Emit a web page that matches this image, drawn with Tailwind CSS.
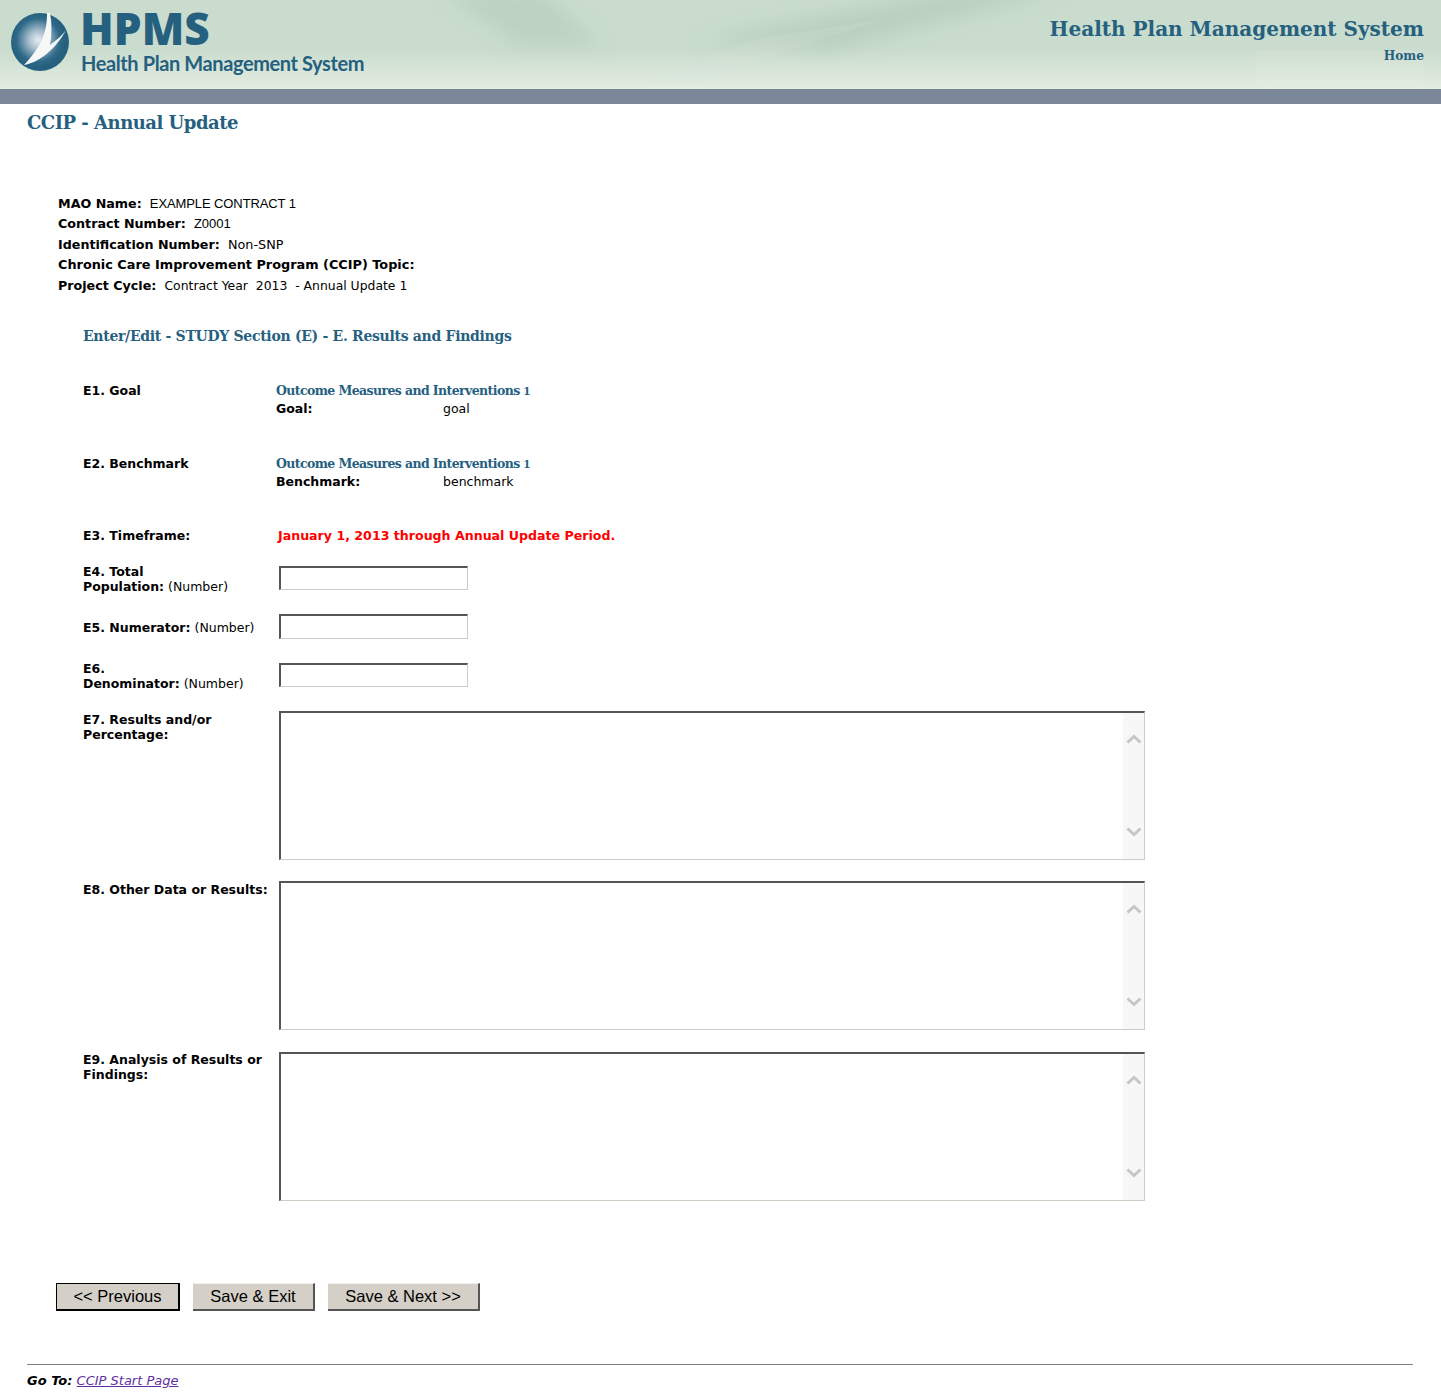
<!DOCTYPE html>
<html lang="en">
<head>
  <meta charset="UTF-8" />
  <title>CCIP - Annual Update</title>
  <script src="https://cdn.jsdelivr.net/npm/@tailwindcss/browser@4"></script>
</head>
<body class="bg-white font-['DejaVu_Sans',sans-serif] text-[12.5px] text-black">

  <!-- Header -->
  <header class="relative h-[89px] bg-linear-to-b from-[#c9dccd] from-55% to-[#e4ede2] overflow-hidden">
    <svg class="absolute left-0 top-0" width="1441" height="89" viewBox="0 0 1441 89">
      <defs>
        <filter id="soft" x="-20%" y="-50%" width="140%" height="200%"><feGaussianBlur stdDeviation="9"/></filter>
      </defs>
      <g filter="url(#soft)">
        <polygon points="440,-10 540,-10 600,45 520,45" fill="#b8cfbc" opacity="0.75"/>
        <polygon points="700,40 960,-10 1060,-10 830,50" fill="#b5ccb9" opacity="0.8"/>
      </g>
      <polygon points="640,85 760,38 880,20 690,85" fill="#d8e5da" opacity="0.22"/>
      <rect x="1256" y="50" width="167" height="39" fill="#e4ede2" opacity="0.2"/>
    </svg>
    <div class="relative flex justify-between h-full">
      <div class="flex pl-[11px] pt-[13px]">
        <svg class="shrink-0" width="58" height="58" viewBox="0 0 58 58">
          <defs>
            <radialGradient id="globe" gradientUnits="userSpaceOnUse" cx="27" cy="27" r="27">
              <stop offset="0" stop-color="#e8edf0"/>
              <stop offset="0.35" stop-color="#a5bccb"/>
              <stop offset="0.8" stop-color="#2f6a89"/>
              <stop offset="1" stop-color="#26607f"/>
            </radialGradient>
          </defs>
          <circle cx="29" cy="29" r="29" fill="url(#globe)"/>
          <path d="M36 0 C36 14 34 30 13 52 C26 50 44 38 55 17 C50 24 44 28 39 32 C41 22 41 10 39 0 Z" fill="#f5f8f6"/>
        </svg>
        <div class="ml-[11px]">
          <div class="font-['Open_Sans',sans-serif] font-extrabold text-[44px] leading-[36px] mt-[-3px] tracking-[0.1px] text-[#26607f]">HPMS</div>
          <div class="font-['Lato',sans-serif] font-bold text-[20px] leading-[28px] mt-[3px] ml-[1px] tracking-[-0.4px] text-[#26607f]">Health Plan Management System</div>
        </div>
      </div>
      <div class="text-right pr-[17px] pt-[15px] font-['DejaVu_Serif',serif] font-bold text-[#26607f]">
        <div class="text-[20px] leading-[28px]">Health Plan Management System</div>
        <div class="text-[12.2px] leading-[18px] mt-[4px]">Home</div>
      </div>
    </div>
  </header>
  <div class="h-[15px] bg-[#798799]"></div>

  <main class="pl-[27px] pr-[28px]">
    <h1 class="font-['DejaVu_Serif',serif] font-bold text-[18px] leading-[26px] mt-[6px] tracking-[-0.5px] text-[#26607f]">CCIP - Annual Update</h1>

    <!-- Contract info -->
    <div class="ml-[31px] mt-[58px] leading-[20.4px] text-[12.7px]">
      <div class="h-[20.4px]"><b>MAO Name:</b>&nbsp; <span class="font-['Liberation_Sans',sans-serif] text-[13px] tracking-[-0.1px]">EXAMPLE CONTRACT 1</span></div>
      <div class="h-[20.4px]"><b>Contract Number:</b>&nbsp; <span class="font-['Liberation_Sans',sans-serif] text-[13px]">Z0001</span></div>
      <div class="h-[20.4px]"><b>Identification Number:</b>&nbsp; <span class="text-[12.8px]">Non-SNP</span></div>
      <div class="h-[20.4px] text-[12.85px]"><b>Chronic Care Improvement Program (CCIP) Topic:</b></div>
      <div class="h-[20.4px]"><b>Project Cycle:</b>&nbsp; <span class="text-[12.4px]">Contract Year&nbsp; 2013&nbsp; - Annual Update 1</span></div>
    </div>

    <div class="ml-[56px]">
      <h2 class="font-['DejaVu_Serif',serif] font-bold text-[14px] leading-[20px] mt-[30px] tracking-[-0.3px] text-[#26607f]">Enter/Edit - STUDY Section (E) - E. Results and Findings</h2>

      <div class="flex mt-[36px]">
        <div class="w-[193px] font-bold leading-[18px]">E1. Goal</div>
        <div>
          <div class="font-['DejaVu_Serif',serif] font-bold text-[12.5px] leading-[18px] tracking-[-0.6px] text-[#26607f]">Outcome Measures and Interventions <span class="text-[10.5px]">1</span></div>
          <div class="flex leading-[18px]"><b class="w-[167px]">Goal:</b><span>goal</span></div>
        </div>
      </div>

      <div class="flex mt-[37px]">
        <div class="w-[193px] font-bold leading-[18px]">E2. Benchmark</div>
        <div>
          <div class="font-['DejaVu_Serif',serif] font-bold text-[12.5px] leading-[18px] tracking-[-0.6px] text-[#26607f]">Outcome Measures and Interventions <span class="text-[10.5px]">1</span></div>
          <div class="flex leading-[18px]"><b class="w-[167px]">Benchmark:</b><span>benchmark</span></div>
        </div>
      </div>

      <div class="flex mt-[36px]">
        <div class="w-[195px] font-bold leading-[18px]">E3. Timeframe:</div>
        <div class="font-bold text-[12.6px] leading-[18px] text-[#f00]">January 1, 2013 through Annual Update Period.</div>
      </div>

      <div class="flex h-[24px] mt-[21px]">
        <div class="w-[196px] leading-[15px] -mt-[2px] shrink-0"><b>E4. Total<br>Population:</b> (Number)</div>
        <input type="text" class="w-[189px] h-[24px] bg-white border border-[#d0ccc4] border-t-2 border-l-2 border-t-[#555] border-l-[#555]">
      </div>

      <div class="flex h-[25px] mt-[24px]">
        <div class="w-[196px] leading-[15px] pt-[6px] shrink-0"><b>E5. Numerator:</b> (Number)</div>
        <input type="text" class="w-[189px] h-[25px] bg-white border border-[#d0ccc4] border-t-2 border-l-2 border-t-[#555] border-l-[#555]">
      </div>

      <div class="flex h-[24px] mt-[24px]">
        <div class="w-[196px] leading-[15px] -mt-[2px] shrink-0"><b>E6.<br>Denominator:</b> (Number)</div>
        <input type="text" class="w-[189px] h-[24px] bg-white border border-[#d0ccc4] border-t-2 border-l-2 border-t-[#555] border-l-[#555]">
      </div>

      <div class="flex mt-[24px]">
        <div class="w-[196px] leading-[15px] pt-[1px] font-bold shrink-0">E7. Results and/or<br>Percentage:</div>
        <div class="relative w-[866px] h-[149px] bg-white border border-[#d0ccc4] border-t-2 border-l-2 border-t-[#555] border-l-[#555]">
          <div class="absolute right-0 top-0 bottom-0 w-[21px] bg-[#f7f7f7] flex flex-col justify-between items-center pt-[21px] pb-[22px]">
            <svg width="16" height="10" viewBox="0 0 16 10"><path d="M1.5 8.5 L8 2.5 L14.5 8.5" fill="none" stroke="#c6c6c6" stroke-width="3"/></svg>
            <svg width="16" height="10" viewBox="0 0 16 10"><path d="M1.5 1.5 L8 7.5 L14.5 1.5" fill="none" stroke="#c6c6c6" stroke-width="3"/></svg>
          </div>
        </div>
      </div>

      <div class="flex mt-[21px]">
        <div class="w-[196px] leading-[15px] pt-[1px] font-bold shrink-0">E8. Other Data or Results:</div>
        <div class="relative w-[866px] h-[149px] bg-white border border-[#d0ccc4] border-t-2 border-l-2 border-t-[#555] border-l-[#555]">
          <div class="absolute right-0 top-0 bottom-0 w-[21px] bg-[#f7f7f7] flex flex-col justify-between items-center pt-[21px] pb-[22px]">
            <svg width="16" height="10" viewBox="0 0 16 10"><path d="M1.5 8.5 L8 2.5 L14.5 8.5" fill="none" stroke="#c6c6c6" stroke-width="3"/></svg>
            <svg width="16" height="10" viewBox="0 0 16 10"><path d="M1.5 1.5 L8 7.5 L14.5 1.5" fill="none" stroke="#c6c6c6" stroke-width="3"/></svg>
          </div>
        </div>
      </div>

      <div class="flex mt-[22px]">
        <div class="w-[196px] leading-[15px] font-bold shrink-0">E9. Analysis of Results or<br>Findings:</div>
        <div class="relative w-[866px] h-[149px] bg-white border border-[#d0ccc4] border-t-2 border-l-2 border-t-[#555] border-l-[#555]">
          <div class="absolute right-0 top-0 bottom-0 w-[21px] bg-[#f7f7f7] flex flex-col justify-between items-center pt-[21px] pb-[22px]">
            <svg width="16" height="10" viewBox="0 0 16 10"><path d="M1.5 8.5 L8 2.5 L14.5 8.5" fill="none" stroke="#c6c6c6" stroke-width="3"/></svg>
            <svg width="16" height="10" viewBox="0 0 16 10"><path d="M1.5 1.5 L8 7.5 L14.5 1.5" fill="none" stroke="#c6c6c6" stroke-width="3"/></svg>
          </div>
        </div>
      </div>
    </div>

    <!-- Buttons -->
    <div class="flex ml-[29px] mt-[82px] font-['Liberation_Sans',sans-serif] text-[16.5px]">
      <button class="w-[124px] h-[28px] bg-[#d4d0c8] border border-black border-r-2 border-b-2">&lt;&lt; Previous</button>
      <button class="ml-[13px] w-[122px] h-[28px] bg-[#d4d0c8] border-r-2 border-b-2 border-r-[#555] border-b-[#555] border-t border-t-[#eee]">Save &amp; Exit</button>
      <button class="ml-[13px] w-[152px] h-[28px] bg-[#d4d0c8] border-r-2 border-b-2 border-r-[#555] border-b-[#555] border-t border-t-[#eee]">Save &amp; Next &gt;&gt;</button>
    </div>

    <hr class="mt-[53px] border-t border-[#808080]">
    <div class="mt-[8px] leading-[15px] text-[13px]"><b><i>Go To:</i></b> <a href="#" class="italic underline text-[#5f2ea0]">CCIP Start Page</a></div>
  </main>

</body>
</html>
